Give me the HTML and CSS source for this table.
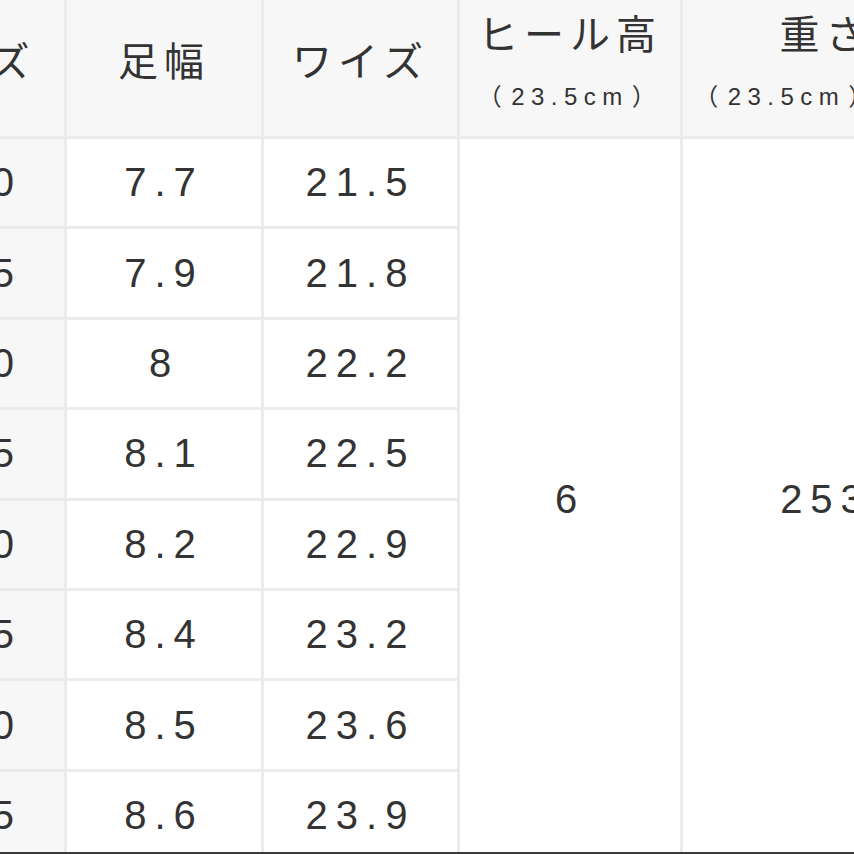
FILE: index.html
```html
<!DOCTYPE html>
<html lang="ja">
<head>
<meta charset="utf-8">
<link rel="stylesheet" href="styles.css">
</head>
<body>
<div class="frame">
  <div class="table">
    <div class="th"><span class="h1">サイズ</span></div>
    <div class="th"><span class="h1">足幅</span></div>
    <div class="th"><span class="h1">ワイズ</span></div>
    <div class="th two"><span class="h1">ヒール高</span><span class="h2"><span class="pl">（</span>23.5cm<span class="pr">）</span></span></div>
    <div class="th two"><span class="h1">重さ</span><span class="h2 shift"><span class="pl">（</span>23.5cm<span class="pr">）</span></span></div>

    <div class="rh">21.0</div><div class="td">7.7</div><div class="td">21.5</div>
    <div class="td span">6</div><div class="td span">253</div>
    <div class="rh">21.5</div><div class="td">7.9</div><div class="td">21.8</div>
    <div class="rh">22.0</div><div class="td">8</div><div class="td">22.2</div>
    <div class="rh">22.5</div><div class="td">8.1</div><div class="td">22.5</div>
    <div class="rh">23.0</div><div class="td">8.2</div><div class="td">22.9</div>
    <div class="rh">23.5</div><div class="td">8.4</div><div class="td">23.2</div>
    <div class="rh">24.0</div><div class="td">8.5</div><div class="td">23.6</div>
    <div class="rh">24.5</div><div class="td">8.6</div><div class="td">23.9</div>
  </div>
</div>
</body>
</html>
```

FILE: styles.css
```css
html, body {
  margin: 0;
  padding: 0;
  background: #fff;
  overflow: hidden;
}
body {
  font-family: "Liberation Sans", "Noto Sans CJK JP", sans-serif;
  color: #333;
}
.frame {
  height: 854px;
  box-sizing: border-box;
  border-bottom: 2px solid #3a3a3a;
  overflow: hidden;
}
.table {
  display: grid;
  grid-template-columns: 194px 194px 193px 220px 285px;
  grid-template-rows: 136px repeat(8, 87.4px);
  gap: 3px;
  background: #ebebeb;
  margin-left: -130px;
  width: max-content;
}
.th {
  background: #f7f7f7;
  display: flex;
  flex-direction: column;
  align-items: center;
  justify-content: center;
  padding-bottom: 13px;
  box-sizing: border-box;
}
.th.two {
  justify-content: flex-start;
  padding: 7px 0 0;
}
.h1 {
  font-size: 40px;
  line-height: 56px;
  letter-spacing: 6px;
  white-space: nowrap;
}
.h2 {
  font-size: 24px;
  line-height: 34px;
  letter-spacing: 6.5px;
  margin-top: 17px;
  white-space: nowrap;
}
.pl { margin-right: 3px; }
.pr { margin-left: 3px; }
.h2.shift {
  padding-right: 78px;
}
.td, .rh {
  display: flex;
  align-items: center;
  justify-content: center;
  font-size: 40px;
  letter-spacing: 8px;
  white-space: nowrap;
}
.td { background: #fff; }
.rh { background: #f7f7f7; }
.span { grid-row: span 8; }
```
